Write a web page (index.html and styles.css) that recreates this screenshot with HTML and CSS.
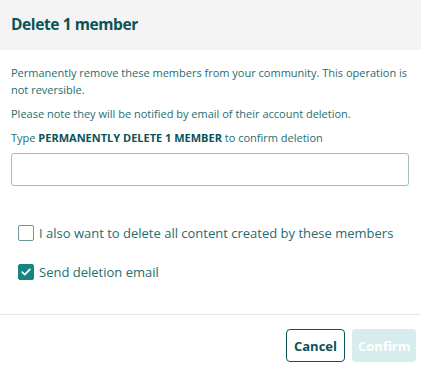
FILE: index.html
```html
<!DOCTYPE html>
<html>
<head>
<meta charset="utf-8">
<link rel="stylesheet" href="styles.css">
</head>
<body>
<div class="modal">
  <div class="header"><h1 class="title">Delete 1 member</h1></div>
  <div class="content">
    <p class="text">Permanently remove these members from your community. This operation is not reversible.</p>
    <p class="text">Please note they will be notified by email of their account deletion.</p>
    <p class="text">Type <strong>PERMANENTLY DELETE 1 MEMBER</strong> to confirm deletion</p>
    <input class="input" type="text">
    <div class="checks">
      <label class="check"><span class="box"></span><span>I also want to delete all content created by these members</span></label>
      <label class="check"><span class="box checked"><svg viewBox="0 0 16 16" width="16" height="16"><path d="M3.6 8.2 L6.6 11.1 L12.4 5.1" fill="none" stroke="#fff" stroke-width="2" stroke-linecap="round" stroke-linejoin="round"/></svg></span><span>Send deletion email</span></label>
    </div>
  </div>
  <div class="footer">
    <button class="btn cancel">Cancel</button>
    <button class="btn confirm">Confirm</button>
  </div>
</div>
</body>
</html>
```
FILE: styles.css
```css
* { box-sizing: border-box; }
html, body { margin: 0; padding: 0; background: #fff; }
body { font-family: "Open Sans", "Lato", sans-serif; color: #1f6669; }
.modal { width: 421px; height: 375px; display: flex; flex-direction: column; }
.header { height: 50px; background: #f4f4f4; display: flex; align-items: center; padding-left: 11px; }
.title { margin: 0; font-size: 15.5px; font-weight: 700; color: #0b5358; letter-spacing: -0.4px; padding-bottom: 3px; }
.content { padding: 14px 11px 0 11px; }
.text { margin: 0 0 7px 0; font-size: 11px; line-height: 17px; color: #256d70; }
.text strong { color: #0b5358; font-weight: 700; }
.input { display: block; width: 398px; height: 33px; margin-top: 7px; border: 1px solid #9fc0c1; border-radius: 3px; background: #fff; outline: none; }
.checks { padding: 39px 0 0 7px; display: flex; flex-direction: column; gap: 23px; }
.check { display: flex; align-items: center; gap: 5px; font-size: 13px; color: #256d70; height: 16px; }
.box { width: 16px; height: 16px; border: 1.5px solid #6a9798; border-radius: 2px; display: flex; align-items: center; justify-content: center; }
.box.checked { background: #148580; border-color: #148580; }
.box svg { display: block; }
.footer { margin-top: auto; border-top: 1px solid #e0e8e8; height: 61px; display: flex; justify-content: flex-end; align-items: flex-start; padding: 14px 5px 0 0; gap: 7px; }
.btn { height: 33px; border-radius: 4px; font-family: inherit; font-size: 13px; font-weight: 700; padding: 0 6px; }
.cancel { width: 59px; background: #fff; border: 1px solid #0b5358; color: #0b5358; }
.confirm { width: 64px; background: #d7ecec; border: none; color: #fff; }
```
